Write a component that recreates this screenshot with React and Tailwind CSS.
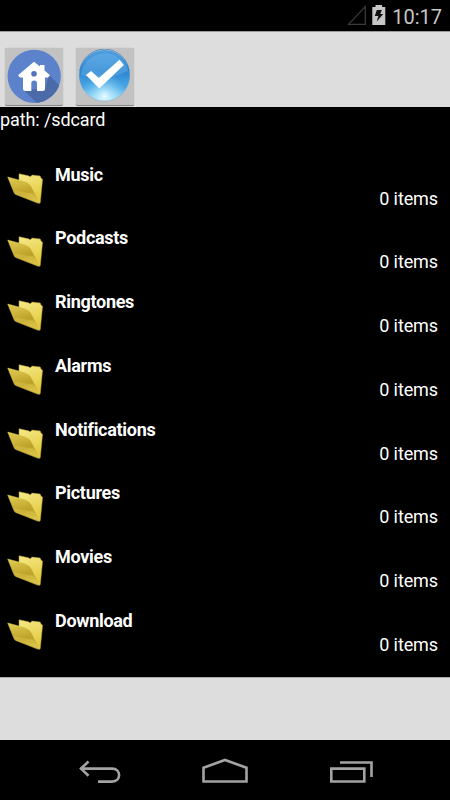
import React from 'react';

const folders = [
  { name: 'Music', count: 0 },
  { name: 'Podcasts', count: 0 },
  { name: 'Ringtones', count: 0 },
  { name: 'Alarms', count: 0 },
  { name: 'Notifications', count: 0 },
  { name: 'Pictures', count: 0 },
  { name: 'Movies', count: 0 },
  { name: 'Download', count: 0 },
];

const StatusBar = () => (
  <div className="flex h-[31px] shrink-0 items-center justify-end bg-black pr-[8px]">
    <svg className="h-[31px] w-[40px]" viewBox="0 0 40 31" fill="none">
      <path d="M2.5 24.3 L19.3 6.5 V24.3 Z" stroke="#3c3c3c" strokeWidth="1.2" />
      <path d="M26.3 7 h3.2 v-2 h6.6 v2 h3.2 v18 h-13 z" fill="#c6c6c6" />
      <path d="M30.8 10 h5 l-1.5 4 h3 l-6.5 7.5 1.5 -5.5 h-3.5 z" fill="#111" />
    </svg>
    <span className="ml-[6px] mt-[2px] text-[20px] leading-[24px] text-[#c6c6c6]">10:17</span>
  </div>
);

const HomeIcon = () => (
  <svg className="h-[54px] w-[54px]" viewBox="0 0 54 54">
    <defs>
      <clipPath id="homeCircle">
        <circle cx="27.2" cy="27.3" r="26.6" />
      </clipPath>
    </defs>
    <circle cx="27.2" cy="27.3" r="26.6" fill="#5b82ca" />
    <path d="M42 26 L54 38 V54 H30 L16 40.5 L38 40 Z" fill="#4b6aa8" clipPath="url(#homeCircle)" />
    <path
      d="M27 12.7 L33 17.5 V16 H37.5 V21.5 L43 26.3 L41 28.5 H38 V39.5 Q38 42 35.5 42 H30 V34 Q30 31.5 27 31.5 Q24.3 31.5 24.3 34 V42 H18.5 Q16 42 16 39.5 V28.5 H13 L11 26.3 Z"
      fill="#fff"
    />
    <circle cx="27" cy="24.8" r="2.8" fill="#4f74bb" />
  </svg>
);

const CheckIcon = () => (
  <svg className="h-[54px] w-[54px]" viewBox="0 0 54 54">
    <defs>
      <linearGradient id="orb" x1="0" y1="0" x2="0" y2="1">
        <stop offset="0" stopColor="#4f9fe0" />
        <stop offset="0.45" stopColor="#2f88d2" />
        <stop offset="0.75" stopColor="#4ba9e6" />
        <stop offset="1" stopColor="#a5e2fc" />
      </linearGradient>
      <radialGradient id="orbGlow" cx="0.5" cy="0.92" r="0.45">
        <stop offset="0" stopColor="#e6fcff" />
        <stop offset="1" stopColor="#7fd3fa" stopOpacity="0" />
      </radialGradient>
    </defs>
    <circle cx="26.5" cy="27" r="25.5" fill="#9fb6c6" />
    <circle cx="26.5" cy="26.3" r="25.3" fill="url(#orb)" />
    <circle cx="26.5" cy="26.3" r="25.3" fill="url(#orbGlow)" />
    <path d="M1.7 22 A25 25 0 0 1 51.3 22" fill="none" stroke="#2473bd" strokeWidth="1" strokeOpacity="0.6" />
    <path d="M3 26 A24 24 0 0 1 50 22 Q41 26 31 29 Q17 31 3 26 Z" fill="#8ac4ef" fillOpacity="0.28" />
    <path d="M8 26 L13 22 L20.8 29 L41.5 10.8 L45.8 16 L21.3 39.5 Z" fill="#fff" />
  </svg>
);

const FolderIcon = () => (
  <svg className="h-[36px] w-[40px]" viewBox="0 0 40 36">
    <defs>
      <linearGradient id="folderBack" x1="0" y1="0" x2="0.3" y2="1">
        <stop offset="0" stopColor="#f7e98c" />
        <stop offset="1" stopColor="#e3ca3c" />
      </linearGradient>
      <linearGradient id="folderFront" x1="0.2" y1="0" x2="0.5" y2="1">
        <stop offset="0" stopColor="#dfca50" />
        <stop offset="0.65" stopColor="#bea127" />
        <stop offset="1" stopColor="#d3b93c" />
      </linearGradient>
    </defs>
    <path
      d="M12 2.7 L21.5 4.8 L23 5.8 L25.3 4.1 L33.2 5 L34 7 L35.6 8.3 L33.3 31.5 L31 31 L12 20 Z"
      fill="url(#folderBack)"
      stroke="#b19a2c"
      strokeWidth="0.5"
    />
    <path
      d="M0.7 6 L16.5 10.3 Q22 11.8 24 15 L33 32 Q31.5 32.5 30 31.8 L9 23.6 Q7.5 23 7 21.5 Z"
      fill="url(#folderFront)"
      stroke="#e3cf5a"
      strokeWidth="0.5"
    />
    <path d="M7 19.5 L26 22.5 L32.5 31.5 L9 23.4 Z" fill="#eedb68" fillOpacity="0.3" />
  </svg>
);

const ToolButton = ({ label, children }) => (
  <button
    aria-label={label}
    className="flex h-[58px] w-[58px] items-start justify-center rounded-[2px] border-b border-[#858585] bg-[#c2c2c2] pt-[1px] shadow-[0_0_1px_#999]"
  >
    {children}
  </button>
);

const FolderRow = ({ name, count }) => (
  <li className="flex h-[63.75px] pl-[7px] pr-[12px]">
    <div className="pt-[12px]">
      <FolderIcon />
    </div>
    <div className="flex flex-1 flex-col pl-[8px] pt-[4px] text-[18px] leading-[24px]">
      <span className="font-bold tracking-[-0.3px]">{name}</span>
      <span className="text-right tracking-[-0.1px]">{count} items</span>
    </div>
  </li>
);

const NavBar = () => (
  <nav className="flex h-[60px] shrink-0 items-center justify-center gap-[80px] bg-black">
    <svg className="h-[30px] w-[45px]" viewBox="0 0 45 30" fill="none" stroke="#a3a3a3" strokeWidth="2.6">
      <path d="M3.5 13.6 H35 C44.5 13.6 44.5 26.6 35 26.6 H21" />
      <path d="M11.5 6.5 L4 13.6 L11.5 20.8" />
    </svg>
    <svg className="h-[30px] w-[46px]" viewBox="0 0 46 30" fill="none" stroke="#a3a3a3" strokeWidth="2.6">
      <path d="M1.5 26.5 V12.7 L23 5 L44.5 12.7 V26.5 Z" />
    </svg>
    <svg className="h-[30px] w-[45px]" viewBox="0 0 45 30" fill="none" stroke="#a3a3a3" strokeWidth="2.6">
      <path d="M3.3 13.6 H36.3 V26.5 H3.3 Z" />
      <path d="M12 7.5 H43.5 V22" />
    </svg>
  </nav>
);

const App = () => {
  return (
    <div className="flex h-[800px] w-[450px] flex-col overflow-hidden bg-black font-['Roboto',sans-serif] text-white">
      <StatusBar />

      {/* TOOLBAR */}
      <div className="flex h-[76px] shrink-0 gap-[13px] border-t border-[#999] bg-[#dddddd] pl-[5px] pt-[16px]">
        <ToolButton label="Home">
          <HomeIcon />
        </ToolButton>
        <ToolButton label="Select">
          <CheckIcon />
        </ToolButton>
      </div>

      {/* FILE LIST */}
      <div className="flex-1 pt-[1px]">
        <p className="text-[18px] leading-[24px] tracking-[-0.1px]">path: /sdcard</p>
        <ul className="mt-[26.7px]">
          {folders.map(folder => (
            <FolderRow key={folder.name} name={folder.name} count={folder.count} />
          ))}
        </ul>
      </div>

      <div className="h-[63px] shrink-0 border-t border-[#aaa] bg-[#dddddd]" />
      <NavBar />
    </div>
  );
};

export default App;
